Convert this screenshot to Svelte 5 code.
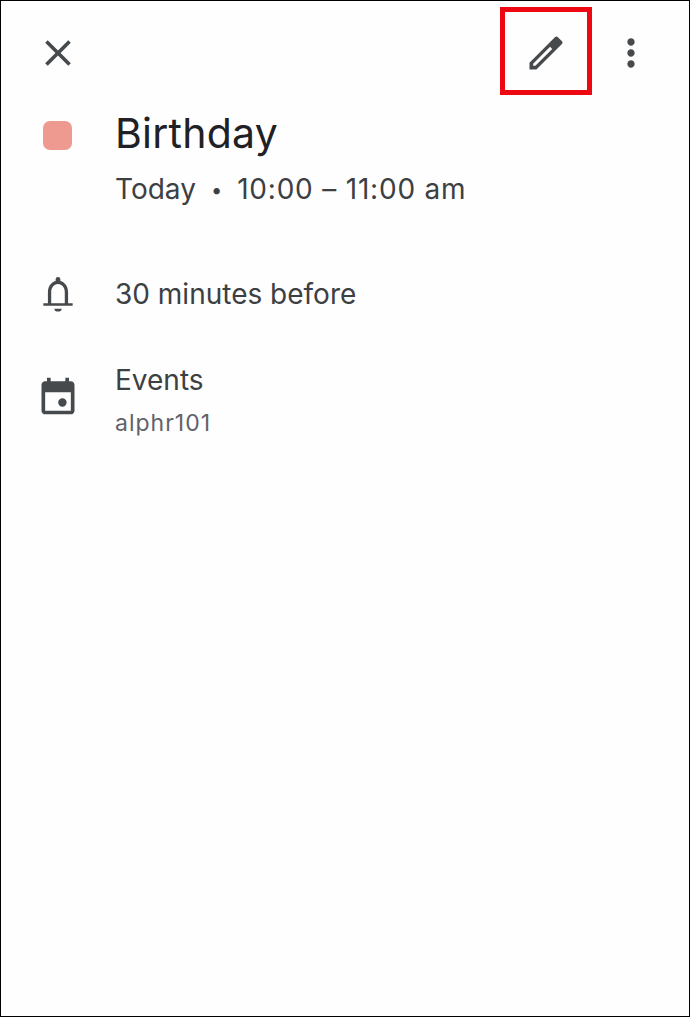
<script>
	const d = {
		close: 'M19 6.41L17.59 5 12 10.59 6.41 5 5 6.41 10.59 12 5 17.59 6.41 19 12 13.41 17.59 19 19 17.59 13.41 12z',
		edit: 'M3 17.25V21h3.75L20.71 7.04c.39-.39.39-1.02 0-1.41l-2.34-2.34c-.39-.39-1.02-.39-1.41 0zM5 17.8v1.2h1.2L15.4 9.8l-1.2-1.2z',
		more: 'M12 8c1.1 0 2-.9 2-2s-.9-2-2-2-2 .9-2 2 .9 2 2 2zm0 2c-1.1 0-2 .9-2 2s.9 2 2 2 2-.9 2-2-.9-2-2-2zm0 6c-1.1 0-2 .9-2 2s.9 2 2 2 2-.9 2-2-.9-2-2-2z',
		bell: 'M6.5 17V11c0-3 1.6-5.4 4.2-6.1V4a1.3 1.3 0 0 1 2.6 0v.9c2.6.7 4.2 3.1 4.2 6.1v6H20v1.4H4V17zM8.3 17h7.4v-6c0-2.5-1.4-4.5-3.7-4.5S8.3 8.5 8.3 11zM10 20h4c0 1.1-.9 1.6-2 1.6s-2-.5-2-1.6z',
		event: 'M19 4h-1V2h-2v2H8V2H6v2H5c-1.1 0-2 .9-2 2v14c0 1.1.9 2 2 2h14c1.1 0 2-.9 2-2V6c0-1.1-.9-2-2-2zm0 16H5V10h14v10zM14.4 13.2a2.3 2.3 0 1 0 0 4.6 2.3 2.3 0 0 0 0-4.6z'
	};
</script>

<div class="screen">
	<header class="toolbar">
		<button class="icon-btn close" aria-label="Close">
			<svg viewBox="0 0 24 24"><path d={d.close} /></svg>
		</button>
		<button class="icon-btn edit" aria-label="Edit">
			<svg viewBox="0 0 24 24"><path fill-rule="evenodd" d={d.edit} /></svg>
		</button>
		<button class="icon-btn more" aria-label="More">
			<svg viewBox="0 0 24 24"><path d={d.more} /></svg>
		</button>
	</header>

	<section class="row title-row">
		<div class="lead"><span class="swatch"></span></div>
		<div>
			<h1>Birthday</h1>
			<p class="when">Today<span class="dot">•</span><span class="time">10:00 – 11:00 am</span></p>
		</div>
	</section>

	<section class="row reminder">
		<div class="lead">
			<svg viewBox="0 0 24 24"><path fill-rule="evenodd" d={d.bell} /></svg>
		</div>
		<p>30 minutes before</p>
	</section>

	<section class="row calendar">
		<div class="lead">
			<svg viewBox="0 0 24 24"><path fill-rule="evenodd" d={d.event} /></svg>
		</div>
		<div>
			<p>Events</p>
			<p class="account">alphr101</p>
		</div>
	</section>
</div>

<style>
	:global(body) {
		margin: 0;
	}

	.screen {
		box-sizing: border-box;
		width: 690px;
		height: 1017px;
		border: 1px solid #000;
		background: #fefefe;
		color: #3c4043;
		font-family: Inter, Roboto, sans-serif;
		overflow: hidden;
	}

	svg {
		display: block;
		width: 44px;
		height: 44px;
		fill: #464a4d;
	}

	p,
	h1 {
		margin: 0;
	}

	.toolbar {
		display: flex;
		align-items: center;
		height: 88px;
		margin-top: 6px;
	}

	.icon-btn {
		display: flex;
		align-items: center;
		justify-content: center;
		padding: 3px 0 0;
		border: 0;
		background: none;
	}

	.close {
		margin-left: 35px;
	}

	.edit {
		box-sizing: border-box;
		width: 92px;
		height: 88px;
		margin-left: 420px;
		border: 5px solid #ed0812;
	}

	.more {
		margin-left: 17px;
	}

	.row {
		display: flex;
	}

	.lead {
		display: flex;
		justify-content: center;
		width: 114px;
		flex-shrink: 0;
	}

	.title-row {
		margin-top: 13px;
	}

	.swatch {
		width: 29px;
		height: 29px;
		margin: 13px 2px 0 0;
		border-radius: 7px;
		background: #ee9a90;
	}

	h1 {
		font-size: 41px;
		line-height: 50px;
		font-weight: 400;
		letter-spacing: 0.25px;
		color: #202124;
	}

	.when {
		margin-top: 13px;
		font-size: 28px;
		line-height: 36px;
	}

	.dot {
		position: relative;
		top: -2px;
		margin: 0 15px;
		font-size: 20px;
	}

	.time {
		letter-spacing: 0.8px;
	}

	.reminder {
		align-items: center;
		margin-top: 62px;
		font-size: 28px;
		line-height: 44px;
	}

	.calendar {
		align-items: flex-start;
		margin-top: 43px;
		font-size: 28px;
		line-height: 42px;
	}

	.calendar .lead {
		padding-top: 15px;
	}

	.account {
		margin-top: 1px;
		font-size: 23px;
		letter-spacing: 1px;
		color: #5f6368;
	}
</style>
